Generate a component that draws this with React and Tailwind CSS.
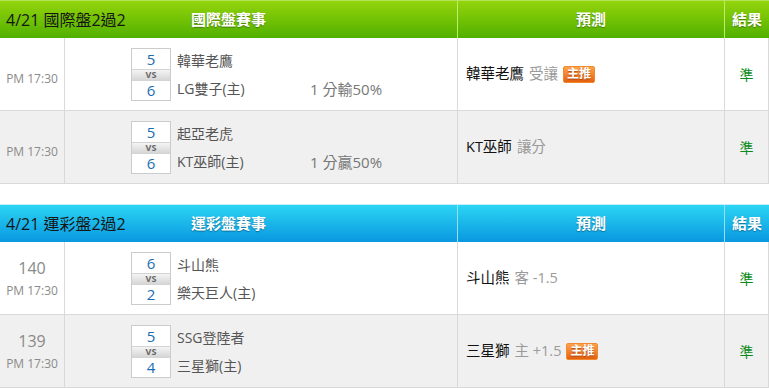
import React from 'react';

const font = { fontFamily: '"Open Sans", "Noto Sans CJK TC", sans-serif' };

const sections = [
    {
        date: '4/21 國際盤2過2',
        title: '國際盤賽事',
        theme: 'green',
        games: [
            { no: '', time: 'PM 17:30', away: '韓華老鷹', home: 'LG雙子(主)', as: 5, hs: 6, line: '1 分輸50%', pick: '韓華老鷹', note: '受讓', hot: true },
            { no: '', time: 'PM 17:30', away: '起亞老虎', home: 'KT巫師(主)', as: 5, hs: 6, line: '1 分贏50%', pick: 'KT巫師', note: '讓分', hot: false },
        ],
    },
    {
        date: '4/21 運彩盤2過2',
        title: '運彩盤賽事',
        theme: 'blue',
        games: [
            { no: '140', time: 'PM 17:30', away: '斗山熊', home: '樂天巨人(主)', as: 6, hs: 2, line: '', pick: '斗山熊', note: '客 -1.5', hot: false },
            { no: '139', time: 'PM 17:30', away: 'SSG登陸者', home: '三星獅(主)', as: 5, hs: 4, line: '', pick: '三星獅', note: '主 +1.5', hot: true },
        ],
    },
];

const Header = ({ date, title, theme }) => {
    const bg = theme === 'green'
        ? 'bg-linear-to-b from-[#93d40c] to-[#4fb000] border-t border-[#b4e35a]'
        : 'bg-linear-to-b from-[#2cd5f3] to-[#0a97e0] border-t border-[#c4eef9]';
    const div = theme === 'green' ? 'border-[#b9ef6a]' : 'border-[#93e1f7]';
    const shadow = '[text-shadow:0_1px_1px_rgba(0,0,0,0.35)]';
    return (
        <div className={`grid grid-cols-[458px_267px_44px] h-[38px] ${bg}`}>
            <div className={`grid grid-cols-[1fr_auto_1fr] items-center border-r ${div}`}>
                <span className="pl-[6px] text-[16px] text-[#151515] whitespace-nowrap">{date}</span>
                <span className={`text-[15px] font-bold text-white ${shadow}`}>{title}</span>
                <span />
            </div>
            <div className={`flex items-center justify-center border-r ${div} text-[15px] font-bold text-white ${shadow}`}>預測</div>
            <div className={`flex items-center justify-center text-[15px] font-bold text-white ${shadow}`}>結果</div>
        </div>
    );
};

const Hot = () => (
    <span className="ml-[5px] inline-flex items-center justify-center h-[17px] px-[3px] rounded-[2px] border border-[#f08a2c] bg-linear-to-b from-[#ffa24a] to-[#e4600c] text-[12px] leading-none text-white font-bold [text-shadow:0_1px_1px_rgba(120,40,0,0.6)]">
        主推
    </span>
);

const Row = ({ g, alt }) => (
    <div className={`grid grid-cols-[65px_393px_267px_44px] h-[73px] border-b border-[#d9d9d9] ${alt ? 'bg-[#f0f0f0]' : 'bg-white'}`}>
        <div className="flex flex-col items-center justify-center border-r border-[#d9d9d9] text-[#8a8a8a]">
            {g.no ? <span className="text-[16px] leading-[20px] mb-[5px]">{g.no}</span> : <span className="h-[10px]" />}
            <span className="text-[12px] leading-[16px]">{g.time}</span>
        </div>
        <div className="flex items-center border-r border-[#d9d9d9] pl-[66px]">
            <div className="flex flex-col w-[40px] border border-[#cccccc] bg-white text-center text-[#1a6db3] text-[15px]">
                <span className="h-[20px] leading-[20px]">{g.as}</span>
                <span className="h-[12px] leading-[10px] border-y border-[#d4d4d4] bg-linear-to-b from-[#f4f4f4] to-[#d6d6d6] text-[9px] font-bold text-[#666]">VS</span>
                <span className="h-[19px] leading-[19px]">{g.hs}</span>
            </div>
            <div className="flex flex-col ml-[6px] text-[14px] text-[#555]">
                <span className="h-[30px] leading-[26px]">{g.away}</span>
                <div className="grid grid-cols-[133px_auto] h-[22px] leading-[22px]">
                    <span>{g.home}</span>
                    <span className="text-[15px] text-[#777]">{g.line}</span>
                </div>
            </div>
        </div>
        <div className="flex items-center border-r border-[#d9d9d9] pl-[8px] text-[14.5px]">
            <span className="text-[#111]">{g.pick}</span>
            <span className="ml-[5px] text-[#9a9a9a]">{g.note}</span>
            {g.hot && <Hot />}
        </div>
        <div className="flex items-center justify-center text-[14px] text-[#0a8a1a] border-r border-[#d9d9d9]">準</div>
    </div>
);

export default function App() {
    return (
        <div className="w-[769px] bg-white" style={font}>
            {sections.map((s, i) => (
                <div key={s.title} className={i > 0 ? 'mt-[20px]' : ''}>
                    <Header date={s.date} title={s.title} theme={s.theme} />
                    {s.games.map((g, j) => (
                        <Row key={g.away} g={g} alt={j % 2 === 1} />
                    ))}
                </div>
            ))}
        </div>
    );
}
